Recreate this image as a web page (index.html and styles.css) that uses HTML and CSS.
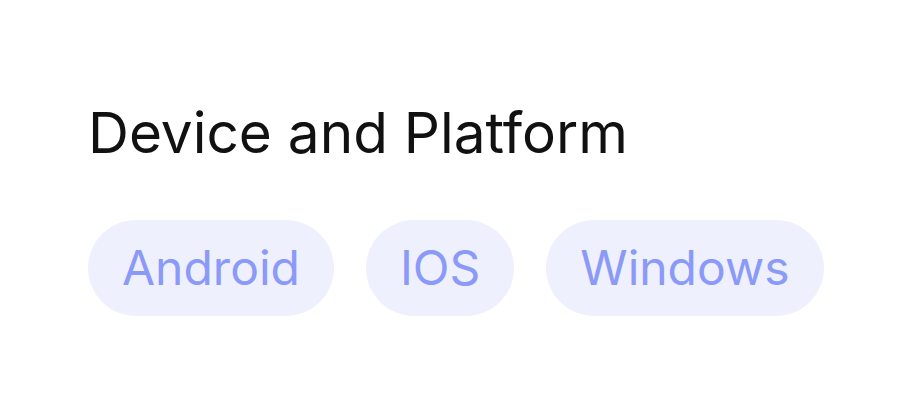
FILE: index.html
```html
<!DOCTYPE html>
<html>
<head>
<meta charset="utf-8">
<link rel="stylesheet" href="styles.css">
</head>
<body>
<section class="panel">
  <h2 class="title">Device and Platform</h2>
  <div class="tags">
    <span class="tag">Android</span>
    <span class="tag">IOS</span>
    <span class="tag">Windows</span>
  </div>
</section>
</body>
</html>
```

FILE: styles.css
```css
html, body {
  margin: 0;
  background: #ffffff;
}
.panel {
  padding: 101px 88px;
  font-family: Inter, "Noto Sans", sans-serif;
}
.title {
  margin: 0;
  font-size: 56.7px;
  font-weight: 400;
  line-height: 64px;
  color: #111111;
}
.tags {
  display: flex;
  gap: 32px;
  margin-top: 55px;
}
.tag {
  padding: 16px 34px;
  font-size: 48px;
  line-height: 64px;
  border-radius: 48px;
  background: #eef0fd;
  color: #8b99f8;
}
```
